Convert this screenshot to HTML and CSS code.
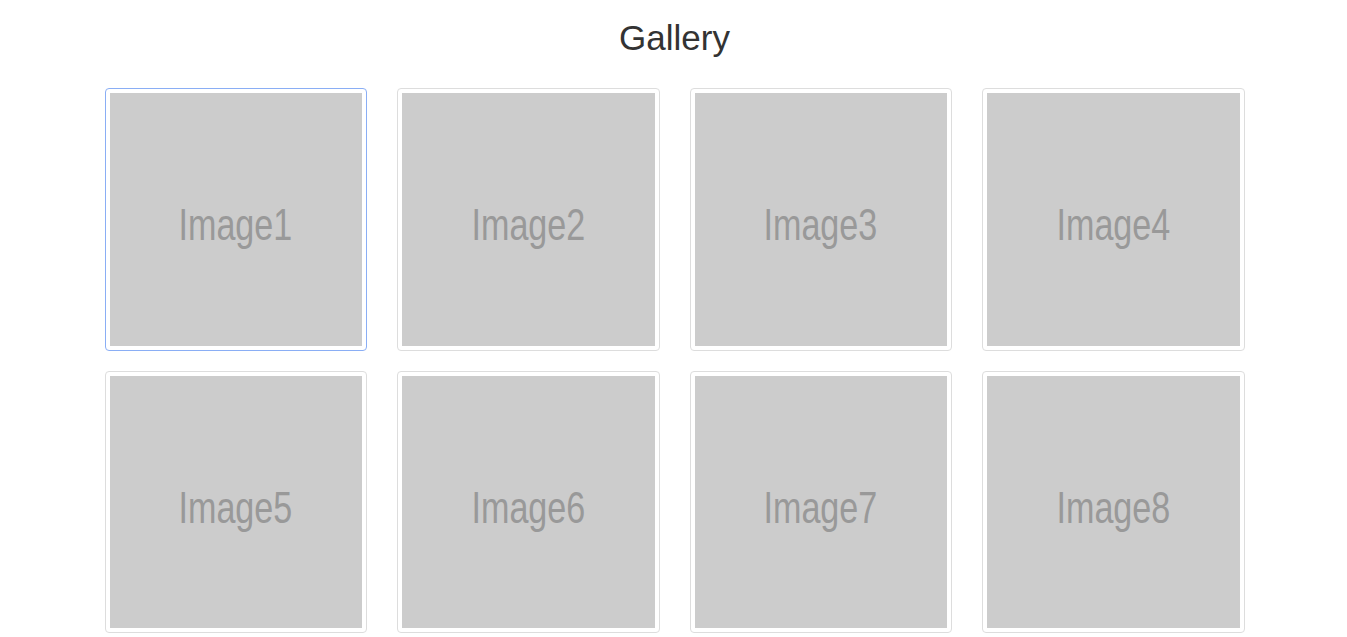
FILE: index.html
```html
<!DOCTYPE html>
<html lang="en">
<head>
<meta charset="utf-8">
<title>Gallery</title>
<link rel="stylesheet" href="styles.css">
</head>
<body>
<main class="container">
  <h1 class="title">Gallery</h1>
  <div class="gallery">
    <a class="thumb active" href="#"><div class="ph"><span class="ph-text">Image1</span></div></a>
    <a class="thumb" href="#"><div class="ph"><span class="ph-text">Image2</span></div></a>
    <a class="thumb" href="#"><div class="ph"><span class="ph-text">Image3</span></div></a>
    <a class="thumb" href="#"><div class="ph"><span class="ph-text">Image4</span></div></a>
    <a class="thumb" href="#"><div class="ph"><span class="ph-text">Image5</span></div></a>
    <a class="thumb" href="#"><div class="ph"><span class="ph-text">Image6</span></div></a>
    <a class="thumb" href="#"><div class="ph"><span class="ph-text">Image7</span></div></a>
    <a class="thumb" href="#"><div class="ph"><span class="ph-text">Image8</span></div></a>
  </div>
</main>
</body>
</html>
```

FILE: styles.css
```css
* { box-sizing: border-box; }
html, body { margin: 0; padding: 0; background: #fff; }
body {
  font-family: "Liberation Sans", Arial, Helvetica, sans-serif;
  color: #333;
}
.container {
  width: 1140px;
  margin: 0 0 0 calc(50% - 569px);
  padding-top: 18px;
}
.title {
  margin: 0 0 30px;
  font-size: 35px;
  line-height: 40px;
  font-weight: 400;
  text-align: center;
  color: #333;
}
.gallery {
  display: grid;
  grid-template-columns: repeat(4, 1fr);
  column-gap: 30px;
  row-gap: 20px;
}
.thumb {
  display: block;
  padding: 4px;
  border: 1px solid #ddd;
  border-radius: 4px;
  background: #fff;
  text-decoration: none;
}
.thumb.active { border-color: #8aaef5; }
.ph {
  aspect-ratio: 1 / 1;
  background: #ccc;
  display: flex;
  align-items: center;
  justify-content: center;
  overflow: hidden;
}
.ph-text {
  font-family: "Liberation Sans", Arial, sans-serif;
  font-size: 44px;
  line-height: 1;
  color: #999;
  transform: scaleX(0.775);
  margin-top: 12px;
}
```
